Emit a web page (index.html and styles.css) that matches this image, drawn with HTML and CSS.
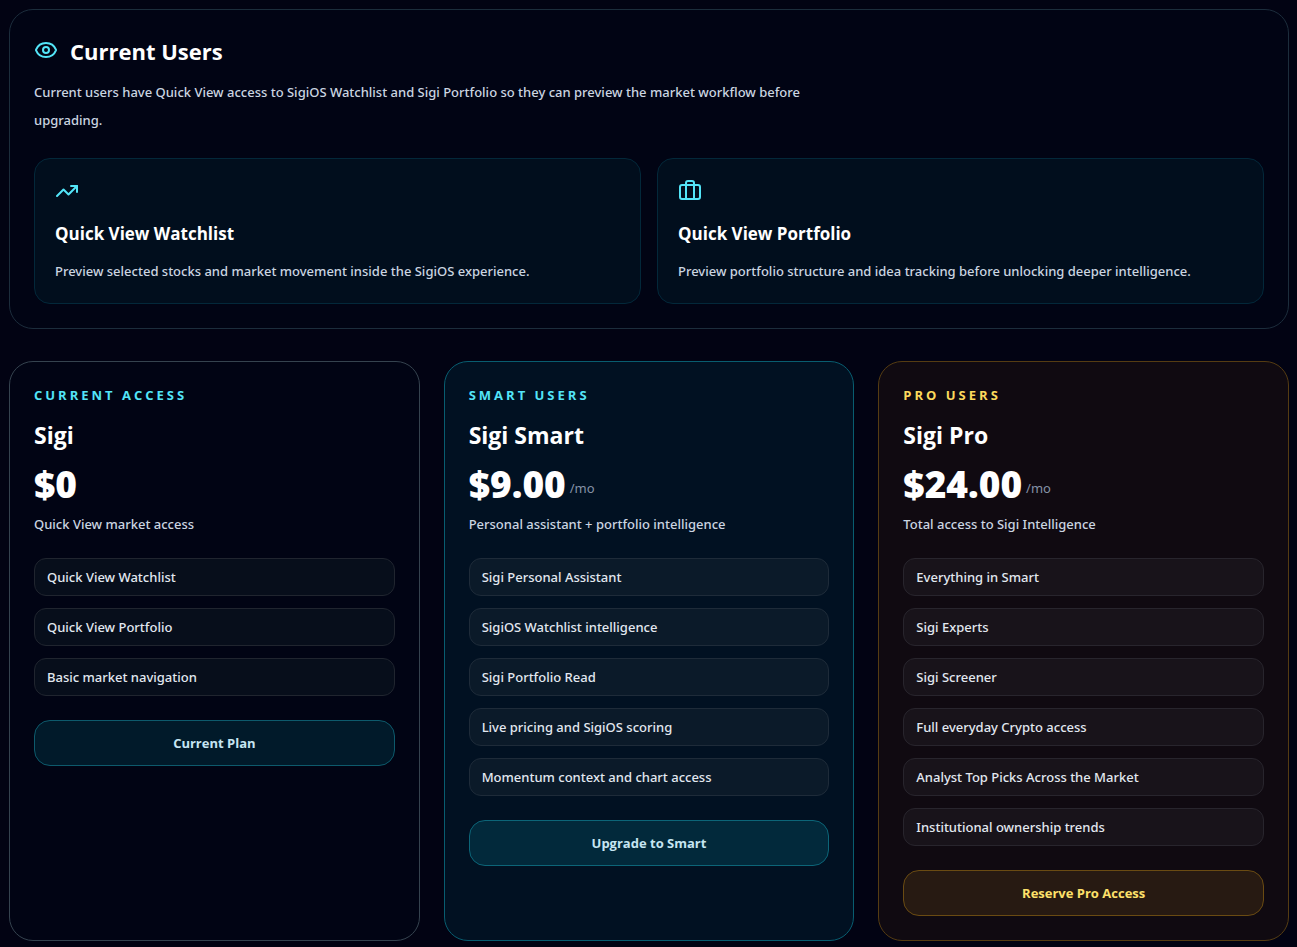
FILE: index.html
```
<!DOCTYPE html>
<html lang="en">
<head>
    <meta charset="UTF-8">
    <meta name="viewport" content="width=device-width, initial-scale=1.0">
    <title>Sigi Plans</title>
    <link rel="stylesheet" href="styles.css">
</head>
<body>

<main class="page">

    <!-- Current users -->
    <section class="panel">
        <div class="panel-title">
            <svg class="icon" viewBox="0 0 24 24" aria-hidden="true">
                <path d="M2.06 12.35a1 1 0 0 1 0-.7 10.75 10.75 0 0 1 19.88 0 1 1 0 0 1 0 .7 10.75 10.75 0 0 1-19.88 0"/>
                <circle cx="12" cy="12" r="3"/>
            </svg>
            <h2>Current Users</h2>
        </div>
        <p class="intro">Current users have Quick View access to SigiOS Watchlist and Sigi Portfolio so they can preview the market workflow before upgrading.</p>

        <div class="previews">
            <article class="preview">
                <svg class="icon" viewBox="0 0 24 24" aria-hidden="true">
                    <path d="M16 7h6v6"/>
                    <path d="m22 7-8.5 8.5-5-5L2 17"/>
                </svg>
                <h3>Quick View Watchlist</h3>
                <p>Preview selected stocks and market movement inside the SigiOS experience.</p>
            </article>
            <article class="preview">
                <svg class="icon" viewBox="0 0 24 24" aria-hidden="true">
                    <path d="M16 20V4a2 2 0 0 0-2-2h-4a2 2 0 0 0-2 2v16"/>
                    <rect width="20" height="14" x="2" y="6" rx="2"/>
                </svg>
                <h3>Quick View Portfolio</h3>
                <p>Preview portfolio structure and idea tracking before unlocking deeper intelligence.</p>
            </article>
        </div>
    </section>

    <!-- Plans -->
    <section class="plans">
        <article class="plan">
            <p class="tag">Current Access</p>
            <h2>Sigi</h2>
            <p class="price">$0</p>
            <p class="summary">Quick View market access</p>
            <ul class="features">
                <li>Quick View Watchlist</li>
                <li>Quick View Portfolio</li>
                <li>Basic market navigation</li>
            </ul>
            <button type="button" class="btn">Current Plan</button>
        </article>

        <article class="plan smart">
            <p class="tag">Smart Users</p>
            <h2>Sigi Smart</h2>
            <p class="price">$9.00<span class="period">/mo</span></p>
            <p class="summary">Personal assistant + portfolio intelligence</p>
            <ul class="features">
                <li>Sigi Personal Assistant</li>
                <li>SigiOS Watchlist intelligence</li>
                <li>Sigi Portfolio Read</li>
                <li>Live pricing and SigiOS scoring</li>
                <li>Momentum context and chart access</li>
            </ul>
            <button type="button" class="btn">Upgrade to Smart</button>
        </article>

        <article class="plan pro">
            <p class="tag">Pro Users</p>
            <h2>Sigi Pro</h2>
            <p class="price">$24.00<span class="period">/mo</span></p>
            <p class="summary">Total access to Sigi Intelligence</p>
            <ul class="features">
                <li>Everything in Smart</li>
                <li>Sigi Experts</li>
                <li>Sigi Screener</li>
                <li>Full everyday Crypto access</li>
                <li>Analyst Top Picks Across the Market</li>
                <li>Institutional ownership trends</li>
            </ul>
            <button type="button" class="btn">Reserve Pro Access</button>
        </article>
    </section>

</main>

</body>
</html>
```
FILE: styles.css
```
* {
    box-sizing: border-box;
}
body {
    font-family: "Segoe UI", "Noto Sans", "Open Sans", sans-serif;
    font-size: 13px;
    line-height: 20px;
    font-weight: 500;
    margin: 0;
    background: #020313;
    color: #ffffff;
}
h2, h3, p, ul {
    margin: 0;
    padding: 0;
}
h2, h3, .tag, .price, .btn {
    font-family: "Segoe UI", "Open Sans", "Noto Sans", sans-serif;
}
h2 {
    font-size: 22px;
    line-height: 34px;
    font-weight: 700;
}
.page {
    display: flex;
    flex-direction: column;
    gap: 32px;
    padding: 9px 8px 6px 9px;
}
.icon {
    display: block;
    flex: none;
    width: 24px;
    height: 24px;
    fill: none;
    stroke: #53e5f8;
    stroke-width: 2;
    stroke-linecap: round;
    stroke-linejoin: round;
}

/* Current users */
.panel {
    padding: 24px;
    border: 1px solid #1c2d3c;
    border-radius: 24px;
    background: #010414;
}
.panel-title {
    display: flex;
    align-items: flex-start;
    gap: 12px;
}
.panel-title .icon {
    margin-top: 4px;
}
.intro {
    max-width: 780px;
    margin-top: 10px;
    line-height: 28px;
    color: #cbd5e1;
}
.previews {
    display: grid;
    grid-template-columns: 1fr 1fr;
    gap: 16px;
    margin-top: 24px;
}
.preview {
    padding: 20px;
    border: 1px solid #03283a;
    border-radius: 16px;
    background: #010e1d;
}
.preview h3 {
    margin-top: 16px;
    font-size: 17px;
    line-height: 30px;
    font-weight: 700;
}
.preview p {
    margin-top: 10px;
    line-height: 24px;
    color: #cbd5e1;
}

/* Plans */
.plans {
    display: grid;
    grid-template-columns: repeat(3, 1fr);
    gap: 24px;
}
.plan {
    padding: 24px;
    border: 1px solid #35434f;
    border-radius: 24px;
    background: #010414;
}
.tag {
    font-size: 13px;
    line-height: 18px;
    font-weight: 700;
    letter-spacing: 3px;
    text-transform: uppercase;
    color: #53e5f8;
}
.plan h2 {
    margin-top: 14px;
    font-size: 23px;
}
.price {
    margin-top: 12px;
    font-size: 37px;
    line-height: 40px;
    font-weight: 800;
}
.period {
    margin-left: 4px;
    font-family: "Segoe UI", "Noto Sans", "Open Sans", sans-serif;
    font-size: 13px;
    line-height: 20px;
    font-weight: 400;
    vertical-align: middle;
    color: #8592a6;
}
.summary {
    margin-top: 10px;
    color: #cbd5e1;
}
.features {
    display: grid;
    gap: 12px;
    margin-top: 24px;
    list-style: none;
}
.features li {
    padding: 8px 12px;
    border: 1px solid #20252f;
    border-radius: 12px;
    background: #070e1b;
    color: #e2e8f0;
}
.btn {
    display: block;
    width: 100%;
    margin-top: 24px;
    padding: 12px 16px;
    border: 1px solid #0d5a6c;
    border-radius: 16px;
    background: #011a2a;
    color: #c6e5f2;
    font-size: 13px;
    line-height: 20px;
    font-weight: 700;
    cursor: pointer;
}

.smart {
    border-color: #085d70;
    background: #011122;
}
.smart .features li {
    border-color: #1e2b39;
    background: #0b1a29;
}
.smart .btn {
    border-color: #0c6578;
    background: #02293b;
}

.pro {
    border-color: #553c12;
    background: #100a11;
}
.pro .tag {
    color: #fcd95c;
}
.pro .features li {
    border-color: #28252d;
    background: #18131a;
}
.pro .btn {
    border-color: #6a4b12;
    background: #271a12;
    color: #fde06a;
}
```
